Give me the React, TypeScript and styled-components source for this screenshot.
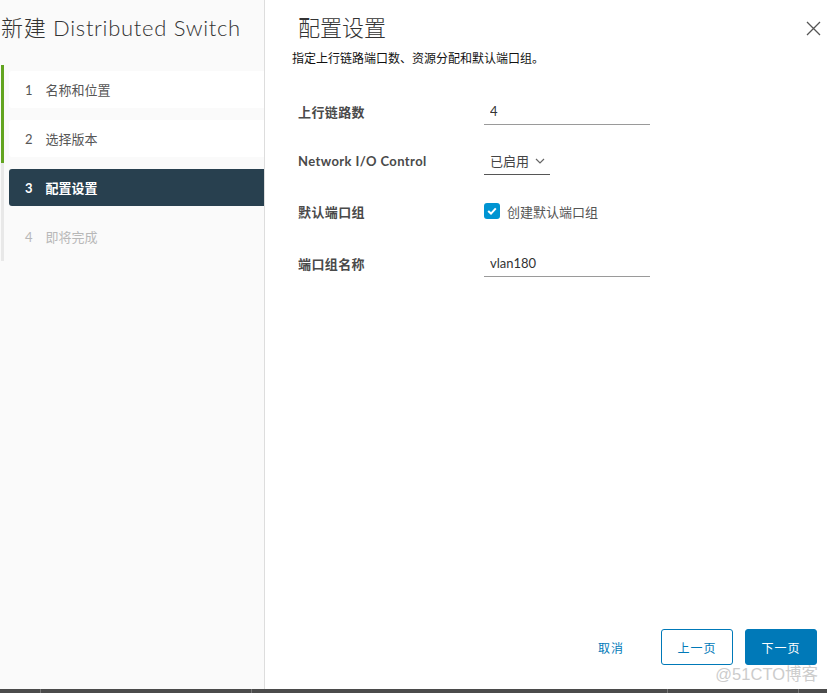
import React from "react";
import styled, { createGlobalStyle } from "styled-components";

const GlobalStyle = createGlobalStyle`
  html, body {
    margin: 0;
    padding: 0;
    background: #ffffff;
  }
  body {
    font-family: Lato, "Noto Sans CJK SC", sans-serif;
    color: #333;
  }
`;

const Page = styled.div`
  width: 827px;
  height: 693px;
  display: flex;
  flex-direction: column;
  overflow: hidden;
  position: relative;
`;

const Dialog = styled.div`
  flex: 1;
  display: flex;
  min-height: 0;
`;

const Sidebar = styled.aside`
  width: 264px;
  background: #fafafa;
  border-right: 1px solid #dddddd;
  display: flex;
  flex-direction: column;
`;

const SideTitle = styled.h1`
  margin: 0;
  padding: 10px 0 0 1px;
  height: 51px;
  box-sizing: border-box;
  font-size: 22px;
  font-weight: 300;
  color: #333;
  white-space: nowrap;
  letter-spacing: 0.7px;
`;

const StepList = styled.ol`
  list-style: none;
  margin: 14px 0 0 1px;
  padding: 0;
  display: flex;
  flex-direction: column;
`;

const Step = styled.li<{ $state: "done" | "active" | "todo" }>`
  display: flex;
  border-left: 3px solid
    ${(p) => (p.$state === "done" ? "#62a420" : "#e8e8e8")};
  padding: 6px 0 6px 5px;
`;

const StepBox = styled.div<{ $state: "done" | "active" | "todo" }>`
  flex: 1;
  height: 37px;
  display: flex;
  align-items: center;
  gap: 13px;
  padding-left: 16px;
  font-size: 13px;
  border-radius: 3px 0 0 3px;
  background: ${(p) =>
    p.$state === "done"
      ? "#ffffff"
      : p.$state === "active"
      ? "#28404f"
      : "transparent"};
  color: ${(p) =>
    p.$state === "active" ? "#ffffff" : p.$state === "todo" ? "#b8b8b8" : "#565656"};
  font-weight: ${(p) => (p.$state === "active" ? 700 : 400)};
`;

const Main = styled.main`
  flex: 1;
  display: flex;
  flex-direction: column;
  padding: 0 0 24px 27px;
  min-width: 0;
`;

const Header = styled.div`
  display: flex;
  align-items: flex-start;
  justify-content: space-between;
  padding-left: 6px;
`;

const Title = styled.h2`
  margin: 0;
  padding-top: 10px;
  font-size: 22px;
  font-weight: 300;
  color: #333;
`;

const CloseButton = styled.button`
  margin: 21px 6px 0 0;
  width: 15px;
  height: 15px;
  padding: 0;
  border: none;
  background: none;
  cursor: pointer;
  display: flex;
`;

const Subtitle = styled.p`
  margin: 7px 0 0 0;
  font-size: 12px;
  color: #111;
`;

const Form = styled.div`
  display: grid;
  grid-template-columns: 186px 166px;
  grid-auto-rows: 50px;
  align-items: center;
  margin: 20px 0 0 6px;
  & > :nth-child(7),
  & > :nth-child(8) {
    margin-top: 5px;
  }
`;

const Label = styled.div`
  font-size: 13px;
  font-weight: 700;
  color: #4a4a4a;
  letter-spacing: 0.4px;
`;

const TextInput = styled.input`
  width: 166px;
  box-sizing: border-box;
  height: 27px;
  border: none;
  border-bottom: 1px solid #9a9a9a;
  padding: 0 0 0 6px;
  font: inherit;
  font-size: 13px;
  color: #333;
  background: transparent;
  outline: none;
`;

const Select = styled.div`
  width: 66px;
  box-sizing: border-box;
  height: 27px;
  border-bottom: 1px solid #565656;
  display: flex;
  align-items: center;
  gap: 6px;
  padding-left: 6px;
  font-size: 13px;
  color: #444;
`;

const CheckRow = styled.label`
  display: flex;
  align-items: center;
  gap: 7px;
  font-size: 13px;
  color: #555;
`;

const CheckBox = styled.span`
  width: 16px;
  height: 16px;
  border-radius: 3px;
  background: #0094d2;
  display: flex;
  align-items: center;
  justify-content: center;
`;

const Spacer = styled.div`
  flex: 1;
`;

const Footer = styled.div`
  display: flex;
  justify-content: flex-end;
  align-items: center;
  gap: 12px;
  padding-right: 10px;
`;

const Button = styled.button<{ $variant: "link" | "outline" | "solid" }>`
  height: 36px;
  min-width: ${(p) => (p.$variant === "link" ? "70px" : "72px")};
  margin-right: ${(p) => (p.$variant === "link" ? "3px" : "0")};
  box-sizing: border-box;
  border-radius: 3px;
  font-family: inherit;
  font-size: 12px;
  letter-spacing: 1px;
  cursor: pointer;
  border: 1px solid ${(p) => (p.$variant === "link" ? "transparent" : "#0079b8")};
  background: ${(p) => (p.$variant === "solid" ? "#0079b8" : "#ffffff")};
  color: ${(p) => (p.$variant === "solid" ? "#ffffff" : "#0079b8")};
`;

const Watermark = styled.div`
  position: absolute;
  right: 9px;
  bottom: 8px;
  font-family: "Liberation Sans", "Noto Sans CJK SC", sans-serif;
  font-size: 16.5px;
  color: #cccccc;
`;

const BottomStrip = styled.div`
  height: 4px;
  background: #4b4b4b;
  display: flex;
  overflow: hidden;
`;

const StripCell = styled.div<{ $w: number }>`
  width: ${(p) => p.$w}px;
  border-right: 1px solid #777;
`;

type StepState = "done" | "active" | "todo";

const steps: { n: number; label: string; state: StepState }[] = [
  { n: 1, label: "名称和位置", state: "done" },
  { n: 2, label: "选择版本", state: "done" },
  { n: 3, label: "配置设置", state: "active" },
  { n: 4, label: "即将完成", state: "todo" },
];

export default function App() {
  return (
    <Page>
      <GlobalStyle />
      <Dialog>
        <Sidebar>
          <SideTitle>新建 Distributed Switch</SideTitle>
          <StepList>
            {steps.map((s) => (
              <Step key={s.n} $state={s.state === "active" ? "todo" : s.state}>
                <StepBox $state={s.state}>
                  <span>{s.n}</span>
                  <span>{s.label}</span>
                </StepBox>
              </Step>
            ))}
          </StepList>
        </Sidebar>
        <Main>
          <Header>
            <Title>配置设置</Title>
            <CloseButton aria-label="关闭">
              <svg width="15" height="15" viewBox="0 0 15 15">
                <path
                  d="M1 1 L14 14 M14 1 L1 14"
                  stroke="#555"
                  strokeWidth="1.3"
                  fill="none"
                />
              </svg>
            </CloseButton>
          </Header>
          <Subtitle>指定上行链路端口数、资源分配和默认端口组。</Subtitle>
          <Form>
            <Label>上行链路数</Label>
            <TextInput defaultValue="4" />
            <Label>Network I/O Control</Label>
            <Select>
              <span>已启用</span>
              <svg width="10" height="6" viewBox="0 0 10 6">
                <path d="M1 1 L5 5 L9 1" stroke="#666" strokeWidth="1.2" fill="none" />
              </svg>
            </Select>
            <Label>默认端口组</Label>
            <CheckRow>
              <CheckBox>
                <svg width="10" height="8" viewBox="0 0 10 8">
                  <path
                    d="M1.2 4 L4 6.6 L8.8 1.4"
                    stroke="#fff"
                    strokeWidth="2"
                    fill="none"
                  />
                </svg>
              </CheckBox>
              创建默认端口组
            </CheckRow>
            <Label>端口组名称</Label>
            <TextInput defaultValue="vlan180" />
          </Form>
          <Spacer />
          <Footer>
            <Button $variant="link">取消</Button>
            <Button $variant="outline">上一页</Button>
            <Button $variant="solid">下一页</Button>
          </Footer>
        </Main>
      </Dialog>
      <Watermark>@51CTO博客</Watermark>
      <BottomStrip>
        <StripCell $w={40} />
        <StripCell $w={210} />
        <StripCell $w={415} />
        <StripCell $w={130} />
      </BottomStrip>
    </Page>
  );
}
